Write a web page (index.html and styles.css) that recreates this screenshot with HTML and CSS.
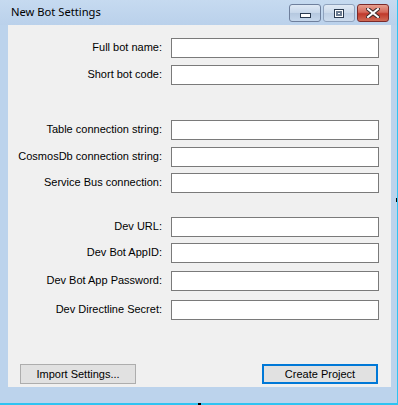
FILE: index.html
```html
<!DOCTYPE html>
<html>
<head>
<meta charset="utf-8">
<link rel="stylesheet" href="styles.css">
</head>
<body>
<div class="window">
  <div class="titlebar">
    <span class="title">New Bot Settings</span>
    <div class="caption-buttons">
      <div class="cbtn cbtn-min"><span class="glyph-min"></span></div>
      <div class="cbtn cbtn-max"><span class="glyph-max"></span></div>
      <div class="cbtn cbtn-close">
        <svg width="14" height="10" viewBox="0 0 14 10">
          <path d="M2 1 L12 9 M12 1 L2 9" stroke="#3a2a2a" stroke-width="4" stroke-linecap="square"/>
          <path d="M2 1 L12 9 M12 1 L2 9" stroke="#ffffff" stroke-width="2" stroke-linecap="square"/>
        </svg>
      </div>
    </div>
  </div>
  <div class="client">
    <div class="group group-1">
      <div class="row"><label class="lbl">Full bot name:</label><div class="box"></div></div>
      <div class="row"><label class="lbl">Short bot code:</label><div class="box"></div></div>
    </div>
    <div class="group group-2">
      <div class="row"><label class="lbl">Table connection string:</label><div class="box"></div></div>
      <div class="row"><label class="lbl">CosmosDb connection string:</label><div class="box"></div></div>
      <div class="row"><label class="lbl">Service Bus connection:</label><div class="box"></div></div>
    </div>
    <div class="group group-3">
      <div class="row"><label class="lbl">Dev URL:</label><div class="box"></div></div>
      <div class="row"><label class="lbl">Dev Bot AppID:</label><div class="box"></div></div>
      <div class="row row-wide"><label class="lbl">Dev Bot App Password:</label><div class="box"></div></div>
      <div class="row row-wider"><label class="lbl">Dev Directline Secret:</label><div class="box"></div></div>
    </div>
    <div class="actions">
      <div class="btn">Import Settings...</div>
      <div class="btn btn-default">Create Project</div>
    </div>
  </div>
  <span class="cursor-mark cursor-right"></span>
  <span class="cursor-mark cursor-bottom"></span>
</div>
</body>
</html>
```

FILE: styles.css
```css
html, body {
  margin: 0;
  padding: 0;
  background: #bfd4ec;
}
.window {
  position: relative;
  width: 398px;
  height: 405px;
  box-sizing: border-box;
  background: #bcd3ec;
  border-right: 1px solid #2fc3f2;
  border-bottom: 2px solid #2fc3f2;
  display: flex;
  flex-direction: column;
}
.titlebar {
  height: 25px;
  display: flex;
  align-items: flex-start;
  justify-content: space-between;
  background: linear-gradient(to bottom, #c6daf0, #bad1eb);
}
.title {
  font-family: "Noto Sans", "Open Sans", sans-serif;
  font-size: 11.2px;
  color: #000;
  padding-left: 11px;
  padding-top: 4px;
  line-height: 16px;
}
.caption-buttons {
  display: flex;
  gap: 2px;
  padding-top: 4px;
  padding-right: 8px;
}
.cbtn {
  width: 32px;
  height: 18px;
  box-sizing: border-box;
  border: 1px solid #6e7f9c;
  border-radius: 3px;
  display: flex;
  align-items: center;
  justify-content: center;
  background: linear-gradient(to bottom, #dfe9f5 0%, #c7d7ea 48%, #b5c8df 52%, #c5d7ec 100%);
}
.cbtn-max {
  border-color: #8fa2bd;
  background: linear-gradient(to bottom, #e1eaf5 0%, #ccdaeb 48%, #bfd0e5 52%, #cddcee 100%);
}
.cbtn-close {
  border-color: #7b2a2a;
  background: linear-gradient(to bottom, #e6a090 0%, #d5685a 45%, #c0392b 55%, #d06a55 100%);
}
.glyph-min {
  display: block;
  width: 11px;
  height: 5px;
  box-sizing: border-box;
  border: 1px solid #2a3a50;
  background: #ffffff;
  margin-top: 4px;
}
.glyph-max {
  display: block;
  width: 10px;
  height: 9px;
  box-sizing: border-box;
  border: 1px solid #2a3a50;
  background: #ffffff;
  box-shadow: inset 0 0 0 1px #ffffff, inset 0 0 0 3px #6a7a90;
}
.client {
  flex: 1;
  margin: 0 6px 16px 8px;
  background: #f0f0f0;
  display: flex;
  flex-direction: column;
  font-family: "Liberation Sans", Arial, sans-serif;
  font-size: 11px;
  color: #000;
}
.group {
  display: flex;
  flex-direction: column;
  gap: 7px;
}
.group-1 { margin-top: 13px; }
.group-2 { margin-top: 35px; gap: 6.5px; }
.group-3 { margin-top: 24px; gap: 6px; }
.row-wide { margin-top: 2px; }
.row-wider { margin-top: 3px; }
.row {
  display: flex;
  align-items: center;
  height: 20px;
}
.lbl {
  width: 154px;
  text-align: right;
  white-space: nowrap;
  margin-top: -2px;
}
.box {
  width: 208px;
  height: 20px;
  box-sizing: border-box;
  margin-left: 9px;
  background: #ffffff;
  border: 1px solid #7a7a7a;
}
.actions {
  margin-top: auto;
  display: flex;
  justify-content: space-between;
  padding: 0 13px 3px 12px;
}
.btn {
  width: 116px;
  height: 20px;
  box-sizing: border-box;
  border: 1px solid #adadad;
  background: #e1e1e1;
  display: flex;
  align-items: center;
  justify-content: center;
  font-size: 11px;
}
.btn-default {
  border: 2px solid #0078d7;
}
.cursor-mark {
  position: absolute;
  background: #000;
}
.cursor-right {
  right: 0;
  top: 198px;
  width: 1px;
  height: 4px;
}
.cursor-bottom {
  left: 198px;
  bottom: -2px;
  width: 3px;
  height: 2px;
}
```
